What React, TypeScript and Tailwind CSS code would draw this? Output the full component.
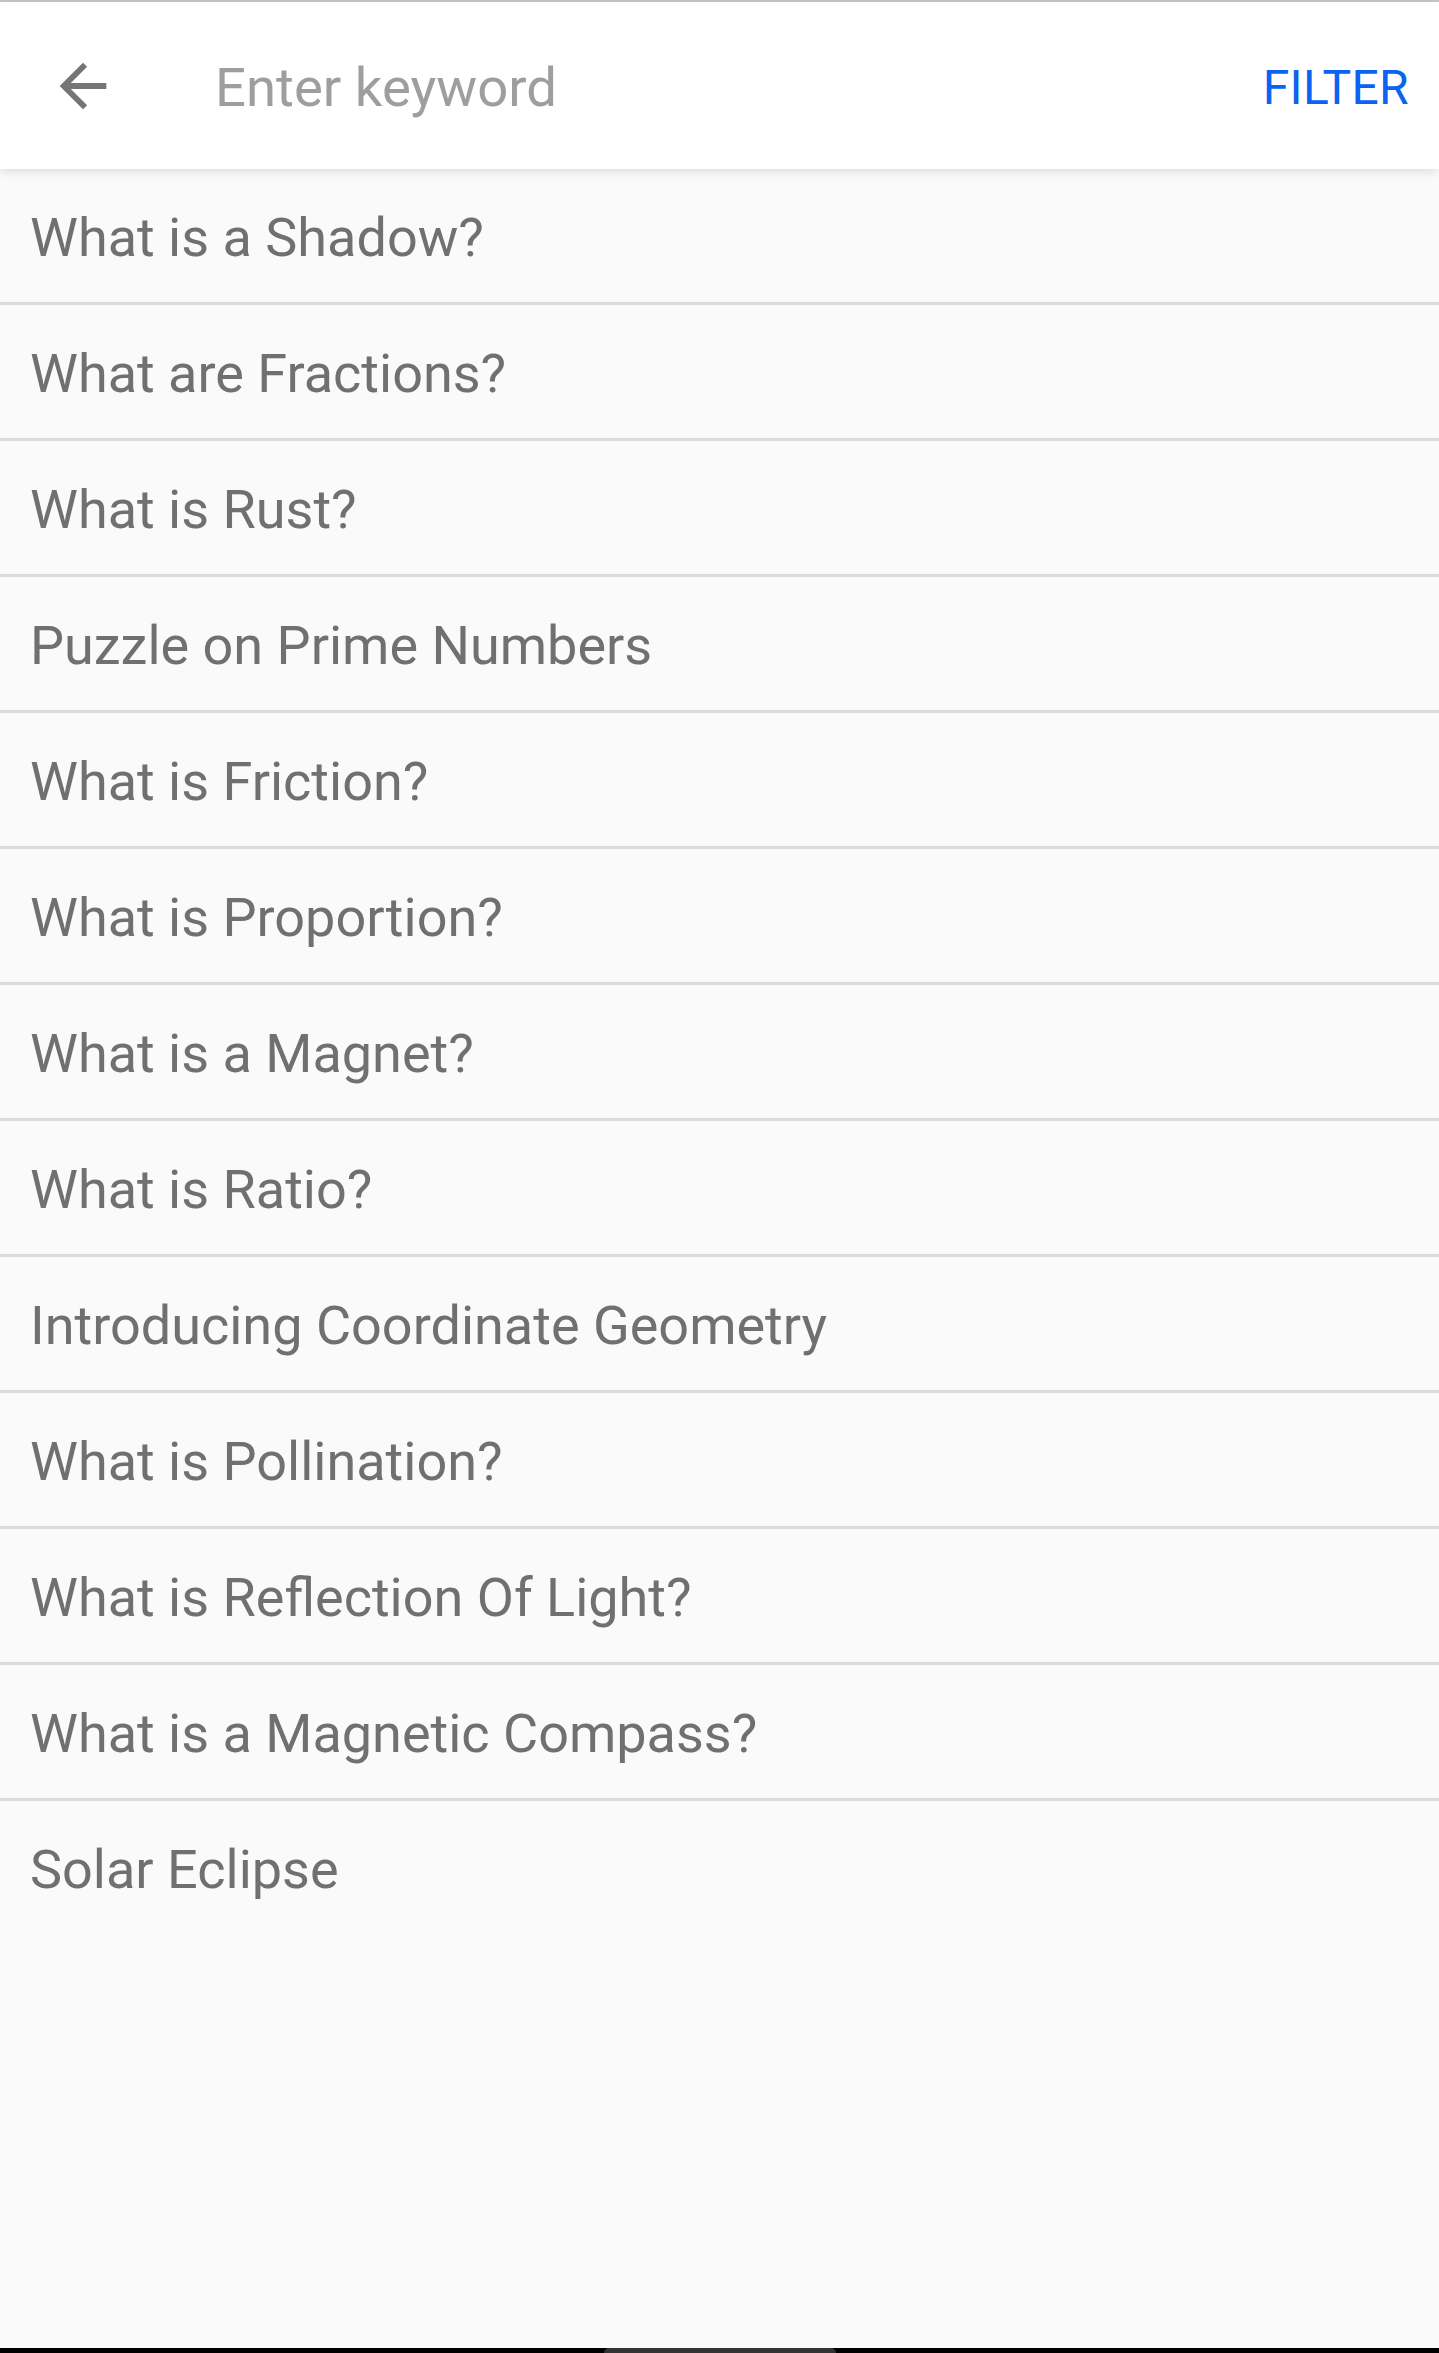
import { useState } from "react";

const topics = [
  "What is a Shadow?",
  "What are Fractions?",
  "What is Rust?",
  "Puzzle on Prime Numbers",
  "What is Friction?",
  "What is Proportion?",
  "What is a Magnet?",
  "What is Ratio?",
  "Introducing Coordinate Geometry",
  "What is Pollination?",
  "What is Reflection Of Light?",
  "What is a Magnetic Compass?",
  "Solar Eclipse",
];

function BackArrow() {
  return (
    <svg viewBox="0 0 24 24" className="w-[70px] h-[70px]" fill="#757575">
      <path d="M20 11H7.83l5.59-5.59L12 4l-8 8 8 8 1.41-1.41L7.83 13H20v-2z" />
    </svg>
  );
}

export default function App() {
  const [keyword, setKeyword] = useState("");

  return (
    <div className="min-h-screen flex flex-col bg-[#fafafa] font-['Roboto',sans-serif] border-t-2 border-[#c8c8c8]">
      <header className="relative z-10 h-[167px] bg-white flex items-center shadow-[0_2px_10px_rgba(0,0,0,0.13)]">
        <button className="ml-[48px] w-[70px] h-[70px] flex items-center justify-center">
          <BackArrow />
        </button>
        <input
          value={keyword}
          onChange={(e) => setKeyword(e.target.value)}
          placeholder="Enter keyword"
          className="ml-[97px] flex-1 bg-transparent outline-none text-[54.5px] text-[#616161] placeholder:text-[#9e9e9e] pt-[4px]"
        />
        <button className="mr-[30px] text-[48px] text-[#0a63f2] tracking-[0.3px] pt-[4px]">FILTER</button>
      </header>

      <ul className="flex flex-col">
        {topics.map((t, i) => (
          <li
            key={t}
            className={
              "h-[130px] box-content flex items-center pl-[30px] pt-[3px] text-[54px] text-[#707070] " +
              (i < topics.length - 1 ? "border-b-[3px] border-[#dcdcdc]" : "")
            }
          >
            {t}
          </li>
        ))}
      </ul>

      <div className="flex-1" />

      <div className="h-[5px] bg-black flex justify-center items-end overflow-hidden">
        <div className="w-[232px] h-[5px] bg-[#333333] rounded-t-[60px]" />
      </div>
    </div>
  );
}
